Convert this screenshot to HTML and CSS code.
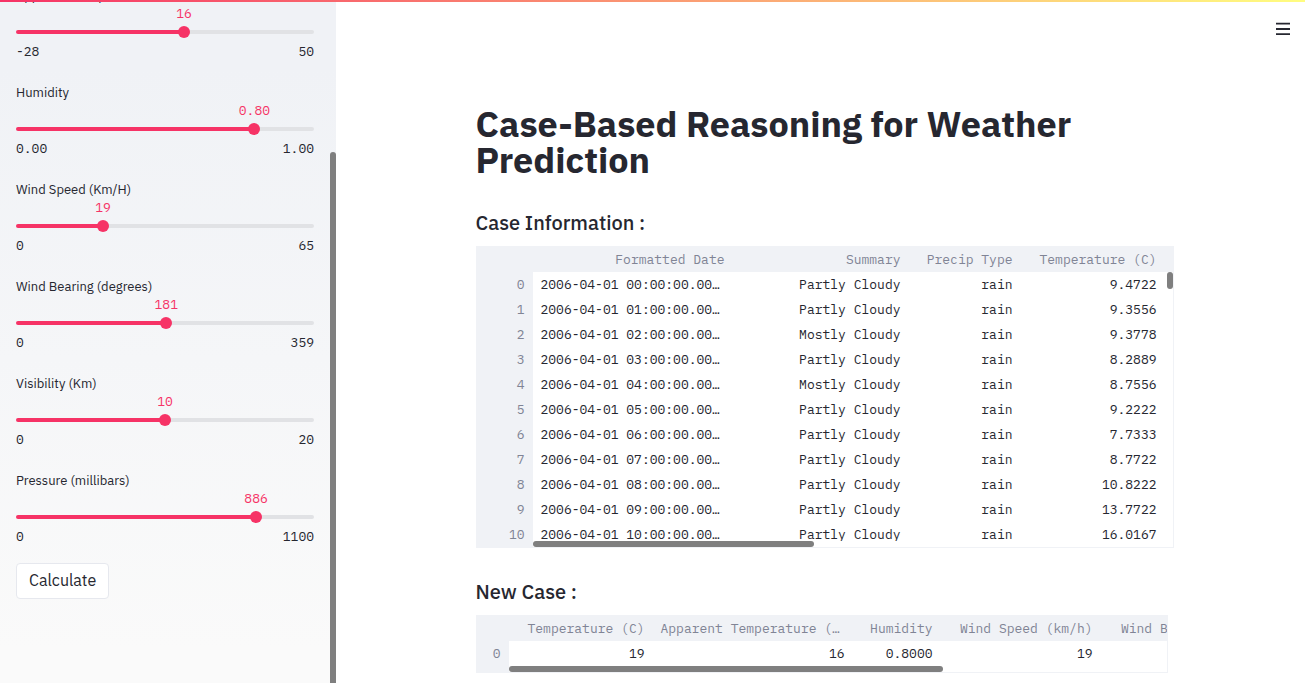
FILE: index.html
```html
<!DOCTYPE html>
<html lang="en">
<head>
<meta charset="utf-8">
<meta name="viewport" content="width=device-width, initial-scale=1">
<title>Case-Based Reasoning for Weather Prediction</title>
<link rel="stylesheet" href="styles.css">
</head>
<body>
<div class="decoration"></div>
<div class="app">
  <aside class="sidebar">
    <form class="controls">
      <div class="slider" style="--p:56.41%">
        <label for="apparent">Apparent Temperature (C)</label>
        <div class="value"><output for="apparent">16</output></div>
        <div class="rail"><input id="apparent" type="range" min="-28" max="50" value="16"></div>
        <div class="limits"><span>-28</span><span>50</span></div>
      </div>
      <div class="slider" style="--p:80%">
        <label for="humidity">Humidity</label>
        <div class="value"><output for="humidity">0.80</output></div>
        <div class="rail"><input id="humidity" type="range" min="0" max="1" step="0.01" value="0.8"></div>
        <div class="limits"><span>0.00</span><span>1.00</span></div>
      </div>
      <div class="slider" style="--p:29.23%">
        <label for="speed">Wind Speed (Km/H)</label>
        <div class="value"><output for="speed">19</output></div>
        <div class="rail"><input id="speed" type="range" min="0" max="65" value="19"></div>
        <div class="limits"><span>0</span><span>65</span></div>
      </div>
      <div class="slider" style="--p:50.42%">
        <label for="bearing">Wind Bearing (degrees)</label>
        <div class="value"><output for="bearing">181</output></div>
        <div class="rail"><input id="bearing" type="range" min="0" max="359" value="181"></div>
        <div class="limits"><span>0</span><span>359</span></div>
      </div>
      <div class="slider" style="--p:50%">
        <label for="visibility">Visibility (Km)</label>
        <div class="value"><output for="visibility">10</output></div>
        <div class="rail"><input id="visibility" type="range" min="0" max="20" value="10"></div>
        <div class="limits"><span>0</span><span>20</span></div>
      </div>
      <div class="slider" style="--p:80.55%">
        <label for="pressure">Pressure (millibars)</label>
        <div class="value"><output for="pressure">886</output></div>
        <div class="rail"><input id="pressure" type="range" min="0" max="1100" value="886"></div>
        <div class="limits"><span>0</span><span>1100</span></div>
      </div>
      <button class="calculate" type="button">Calculate</button>
    </form>
    <div class="sidebar-thumb"></div>
  </aside>
  <main class="main">
    <button class="menu" type="button" aria-label="Menu">
      <svg width="16" height="16" viewBox="0 0 16 16" aria-hidden="true"><path d="M1 2.6h14M1 8h14M1 13.2h14" stroke="#262730" stroke-width="1.8"/></svg>
    </button>
    <div class="block">
      <h1>Case-Based Reasoning for Weather Prediction</h1>
      <h2>Case Information :</h2>
      <div class="frame">
        <table>
          <colgroup><col class="w57"><col class="w200"><col class="w176"><col class="w112"><col class="w144"><col></colgroup>
          <thead><tr><th></th><th>Formatted Date</th><th>Summary</th><th>Precip Type</th><th>Temperature (C)</th><th class="rest"></th></tr></thead>
          <tbody>
            <tr><th>0</th><td>2006-04-01 00:00:00.000 +0200</td><td>Partly Cloudy</td><td>rain</td><td>9.4722</td></tr>
            <tr><th>1</th><td>2006-04-01 01:00:00.000 +0200</td><td>Partly Cloudy</td><td>rain</td><td>9.3556</td></tr>
            <tr><th>2</th><td>2006-04-01 02:00:00.000 +0200</td><td>Mostly Cloudy</td><td>rain</td><td>9.3778</td></tr>
            <tr><th>3</th><td>2006-04-01 03:00:00.000 +0200</td><td>Partly Cloudy</td><td>rain</td><td>8.2889</td></tr>
            <tr><th>4</th><td>2006-04-01 04:00:00.000 +0200</td><td>Mostly Cloudy</td><td>rain</td><td>8.7556</td></tr>
            <tr><th>5</th><td>2006-04-01 05:00:00.000 +0200</td><td>Partly Cloudy</td><td>rain</td><td>9.2222</td></tr>
            <tr><th>6</th><td>2006-04-01 06:00:00.000 +0200</td><td>Partly Cloudy</td><td>rain</td><td>7.7333</td></tr>
            <tr><th>7</th><td>2006-04-01 07:00:00.000 +0200</td><td>Partly Cloudy</td><td>rain</td><td>8.7722</td></tr>
            <tr><th>8</th><td>2006-04-01 08:00:00.000 +0200</td><td>Partly Cloudy</td><td>rain</td><td>10.8222</td></tr>
            <tr><th>9</th><td>2006-04-01 09:00:00.000 +0200</td><td>Partly Cloudy</td><td>rain</td><td>13.7722</td></tr>
            <tr><th>10</th><td>2006-04-01 10:00:00.000 +0200</td><td>Partly Cloudy</td><td>rain</td><td>16.0167</td></tr>
          </tbody>
        </table>
        <div class="vbar"></div>
        <div class="hbar hbar-cases"><div class="thumb"></div></div>
      </div>
      <h2>New Case :</h2>
      <div class="frame frame-new">
        <table class="new-case">
          <colgroup><col class="w33"><col class="w144"><col class="w200"><col class="w88"><col class="w160"><col class="w200"></colgroup>
          <thead><tr><th></th><th>Temperature (C)</th><th>Apparent Temperature (C)</th><th>Humidity</th><th>Wind Speed (km/h)</th><th>Wind Bearing (degrees)</th></tr></thead>
          <tbody><tr><th>0</th><td>19</td><td>16</td><td>0.8000</td><td>19</td><td>181</td></tr></tbody>
        </table>
        <div class="hbar hbar-new"><div class="thumb"></div></div>
      </div>
    </div>
  </main>
</div>
</body>
</html>
```
FILE: styles.css
```css
:root {
  --text: #262730;
  --muted: #808495;
  --shade: #f0f2f6;
  --accent: #f63366;
  --bar: #7f7f7f;
  --sans: "IBM Plex Sans", Roboto, sans-serif;
  --mono: "IBM Plex Mono", "Liberation Mono", monospace;
}
* { box-sizing: border-box; }
body {
  margin: 0;
  color: var(--text);
  font: 16px/24px var(--sans);
  background: #fff;
}
.decoration {
  position: fixed;
  inset: 0 0 auto;
  z-index: 2;
  height: 2px;
  background: linear-gradient(90deg, #f63366, #fffd80);
}
.app {
  display: flex;
  height: 100vh;
  overflow: hidden;
}

/* Sidebar */
.sidebar {
  position: relative;
  flex: none;
  width: 336px;
  padding: 0 22px 0 16px;
  overflow: hidden;
  background: linear-gradient(#f0f2f6, #f0f2f6 10%, #fafafa 95%);
}
.controls {
  display: flex;
  flex-direction: column;
  gap: 22px;
  margin-top: -13px;
}
.slider {
  display: flex;
  flex-direction: column;
  font-size: 13px;
  line-height: 18px;
}
.value {
  padding: 0 0 7px var(--p);
  height: 25px;
  font-family: var(--mono);
  color: var(--accent);
}
.value output {
  display: block;
  width: max-content;
  transform: translateX(-50%);
}
.rail {
  display: flex;
  align-items: center;
  height: 4px;
  border-radius: 2px;
  background: linear-gradient(90deg, var(--accent) var(--p), #e1e2e5 var(--p));
}
.rail input {
  appearance: none;
  flex: 1;
  height: 12px;
  margin: 0 -6px;
  background: transparent;
}
.rail input::-webkit-slider-thumb {
  appearance: none;
  width: 12px;
  height: 12px;
  border-radius: 50%;
  background: var(--accent);
}
.limits {
  display: flex;
  justify-content: space-between;
  padding: 9px 0 1px;
  font-family: var(--mono);
}
.calculate {
  align-self: flex-start;
  margin-top: -6px;
  padding: 4px 12px 6px;
  border: 1px solid #e6e8ee;
  border-radius: 4px;
  background: #fff;
  color: inherit;
  font: 16px/24px var(--sans);
}
.sidebar-thumb {
  position: absolute;
  top: 152px;
  right: 0;
  bottom: -3px;
  width: 6px;
  border-radius: 3px;
  background: var(--bar);
}

/* Main column */
.main {
  position: relative;
  flex: 1;
  display: flex;
  justify-content: center;
  min-width: 0;
  padding: 106px 16px 0 24px;
}
.menu {
  position: absolute;
  top: 21px;
  right: 14px;
  display: flex;
  padding: 0;
  border: 0;
  background: none;
}
.block {
  flex: 1;
  min-width: 0;
  max-width: 698px;
}
h1 {
  margin: 0 0 32px;
  font-size: 36px;
  line-height: 36px;
  font-weight: 700;
}
h2 {
  margin: 0 0 10px;
  font-size: 20px;
  line-height: 26px;
  font-weight: 500;
}

/* Data frames */
.frame {
  position: relative;
  margin-bottom: 31px;
  overflow: hidden;
  border: solid var(--shade);
  border-width: 0 1px 1px 0;
}
.frame-new {
  width: calc(100% - 6px);
  padding-bottom: 6px;
  background: linear-gradient(90deg, var(--shade) 33px, #fff 33px);
}
table {
  width: 100%;
  border-spacing: 0;
  table-layout: fixed;
  font: 13px/18px var(--mono);
}
.new-case { width: 825px; }
.w33 { width: 33px; }
.w57 { width: 57px; }
.w88 { width: 88px; }
.w112 { width: 112px; }
.w144 { width: 144px; }
.w160 { width: 160px; }
.w176 { width: 176px; }
.w200 { width: 200px; }
th, td {
  height: 25px;
  padding: 0 8px;
  overflow: hidden;
  text-align: right;
  text-overflow: ellipsis;
  white-space: nowrap;
}
th {
  background: var(--shade);
  color: var(--muted);
  font-weight: 400;
}
thead th {
  height: 26px;
  padding-top: 2px;
}
thead .rest { padding: 0; }
.vbar {
  position: absolute;
  top: 26px;
  right: 0;
  width: 6px;
  height: 17px;
  border-radius: 3px;
  background: var(--bar);
}
.hbar {
  position: absolute;
  right: 0;
  bottom: 0;
  height: 6px;
  background: #fff;
}
.hbar-cases { left: 57px; }
.hbar-new { left: 33px; }
.thumb {
  height: 6px;
  border-radius: 3px;
  background: var(--bar);
}
.hbar-cases .thumb { width: 44%; }
.hbar-new .thumb { width: 66%; }
```
